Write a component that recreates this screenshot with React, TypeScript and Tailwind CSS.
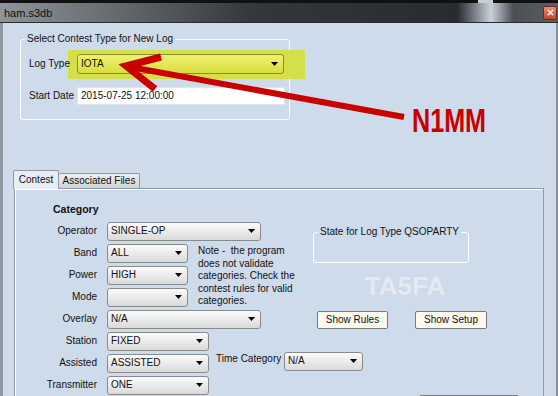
import { X } from "lucide-react";

// dropdown box in the old winforms look
function Combo({ w, v, hot }: { w: string; v: string; hot?: boolean }) {
  return (
    <div
      className={`flex h-[19px] shrink-0 items-center justify-between rounded-[3px] border pl-[3px] pr-[5px] ${w} ${
        hot
          ? "h-[20px] border-[#8e8c2c] bg-gradient-to-b from-[#f0f26e] to-[#d9dd3e]"
          : "border-[#8a8a8a] bg-gradient-to-b from-[#fbfbfb] to-[#dadada]"
      }`}
    >
      <span>{v}</span>
      <svg width="7" height="4" viewBox="0 0 7 4">
        <path d="M0 0h7L3.5 4z" fill="#000" />
      </svg>
    </div>
  );
}

function Row({ label, children }: { label: string; children: React.ReactNode }) {
  return (
    <div className="flex h-[22px] items-center whitespace-nowrap">
      <div className="w-[82px] shrink-0 text-right">{label}</div>
      <div className="ml-[10px] flex shrink-0 items-center">{children}</div>
    </div>
  );
}

export default function App() {
  return (
    <div className="relative h-[396px] w-[558px] overflow-hidden bg-[#111] font-['Liberation_Sans',Arial,sans-serif] text-[10px] leading-[12px] text-[#111]">
      <div className="flex h-[3px]">
        <div className="ml-[478px] w-[15px] bg-[#c9ced3]" />
      </div>
      <div className="flex h-[393px] flex-col">
        {/* title bar */}
        <div className="flex h-[20px] items-center border-b border-[#2a2d30] bg-[linear-gradient(90deg,#8e949a_0%,#62676c_22%,#34383c_45%,#282b2f_82%,#c9d1da_88%,#4b4f54_92%,#5b5f64_100%)] pl-[4px] pr-[1px]">
          <span className="text-[11px] text-[#101010]">ham.s3db</span>
          <div className="ml-auto flex h-[14px] w-[14px] items-center justify-center rounded-[2px] border border-[#6d2a1e] bg-gradient-to-b from-[#eb8d74] to-[#c2452b]">
            <X size={9} strokeWidth={3.5} color="#fff" />
          </div>
        </div>

        {/* window body */}
        <div className="flex flex-1 flex-col border-l-[3px] border-r-[2px] border-l-[#8f98a1] border-r-[#8a929b] bg-[#cedbea]">
          {/* group box */}
          <div className="relative ml-[17px] mt-[16px] h-[81px] w-[270px] rounded-[3px] border border-white">
            <span className="absolute left-[4px] top-[-7px] bg-[#cedbea] px-[2px]">Select Contest Type for New Log</span>
            <div className="absolute left-[47px] top-[10px] h-[29px] w-[237px] bg-[#d5df4a]" />
            <div className="relative flex items-center pt-[14px]">
              <div className="w-[56px] pl-[8px]">Log Type</div>
              <Combo w="w-[207px]" v="IOTA" hot />
            </div>
            <div className="flex items-center pt-[13px]">
              <div className="w-[56px] pl-[8px]">Start Date</div>
              <div className="flex h-[18px] w-[208px] items-center border border-[#dfe5ec] bg-white pl-[3px]">2015-07-25 12:00:00</div>
            </div>
          </div>

          {/* tabs */}
          <div className="ml-[10px] mt-[50px] flex items-end">
            <div className="relative z-10 -mb-px flex h-[19px] w-[46px] items-center justify-center rounded-t-[2px] border border-b-0 border-[#8e9aa6] bg-[#e6edf5]">
              Contest
            </div>
            <div className="flex h-[15px] w-[81px] items-center justify-center rounded-t-[2px] border border-b-0 border-l-0 border-[#8e9aa6] bg-gradient-to-b from-[#efefef] to-[#d3d3d3]">
              Associated Files
            </div>
          </div>

          <div className="ml-[11px] flex w-[530px] flex-1 border border-b-0 border-[#8e9aa6] bg-[#cedbea] pt-[9px] shadow-[inset_1px_1px_0_#fff]">
            {/* left column */}
            <div className="w-[298px] shrink-0">
              <div className="flex h-[22px] items-center pl-[38px] text-[10.5px] font-bold">Category</div>
              <Row label="Operator">
                <Combo w="w-[154px]" v="SINGLE-OP" />
              </Row>
              <div className="flex">
                <div>
                  <Row label="Band">
                    <Combo w="w-[81px]" v="ALL" />
                  </Row>
                  <Row label="Power">
                    <Combo w="w-[81px]" v="HIGH" />
                  </Row>
                  <Row label="Mode">
                    <Combo w="w-[81px]" v="" />
                  </Row>
                </div>
                <div className="ml-[10px] whitespace-nowrap pt-[3px] leading-[12.5px]">
                  Note -&nbsp; the program
                  <br />
                  does not validate
                  <br />
                  categories. Check the
                  <br />
                  contest rules for valid
                  <br />
                  categories.
                </div>
              </div>
              <Row label="Overlay">
                <Combo w="w-[154px]" v="N/A" />
              </Row>
              <Row label="Station">
                <Combo w="w-[102px]" v="FIXED" />
              </Row>
              <Row label="Assisted">
                <Combo w="w-[102px]" v="ASSISTED" />
                <div className="ml-[7px] flex shrink-0 -translate-y-[2px] items-center">
                  <span className="w-[68px] shrink-0 -translate-y-[2px]">Time Category</span>
                  <Combo w="w-[79px]" v="N/A" />
                </div>
              </Row>
              <div className="flex h-[22px] items-center whitespace-nowrap">
                <div className="w-[82px] shrink-0 text-right">Transmitter</div>
                <div className="ml-[10px] shrink-0">
                  <Combo w="w-[102px]" v="ONE" />
                </div>
                <div className="ml-[210px] mt-[38px] h-[18px] w-[100px] shrink-0 rounded-[2px] border border-[#7d7d7d] bg-[#f3f3f3]" />
              </div>
            </div>

            {/* right column */}
            <div className="w-[176px] shrink-0">
              <div className="relative mt-[34px] h-[31px] w-[156px] rounded-[3px] border border-white">
                <span className="absolute left-[4px] top-[-7px] whitespace-nowrap bg-[#cedbea] px-[2px]">State for Log Type QSOPARTY</span>
              </div>
              <div className="mt-[10px] pl-[8px] text-center text-[26px] font-bold leading-[26px] text-[#e3eaf2]">TA5FA</div>
              <div className="ml-[4px] mt-[12px] flex gap-[27px]">
                <div className="flex h-[18px] w-[71px] items-center justify-center rounded-[2px] border border-[#7a7a7a] bg-[#fcf9ef]">Show Rules</div>
                <div className="flex h-[18px] w-[72px] items-center justify-center rounded-[2px] border border-[#7a7a7a] bg-[#fcf9ef]">Show Setup</div>
              </div>
            </div>
          </div>
        </div>
      </div>

      {/* annotation drawn on top of the screenshot */}
      <svg className="pointer-events-none absolute left-0 top-0" width="558" height="396">
        <path d="M404 117L130 67" stroke="#c90000" strokeWidth="6" fill="none" />
        <path d="M161 57L126 66L155 89" stroke="#c90000" strokeWidth="7" fill="none" strokeLinejoin="miter" />
      </svg>
      <div className="absolute left-[412px] top-[103px] origin-left scale-x-[0.74] text-[34px] font-bold leading-[34px] text-[#c80000]">N1MM</div>
    </div>
  );
}
